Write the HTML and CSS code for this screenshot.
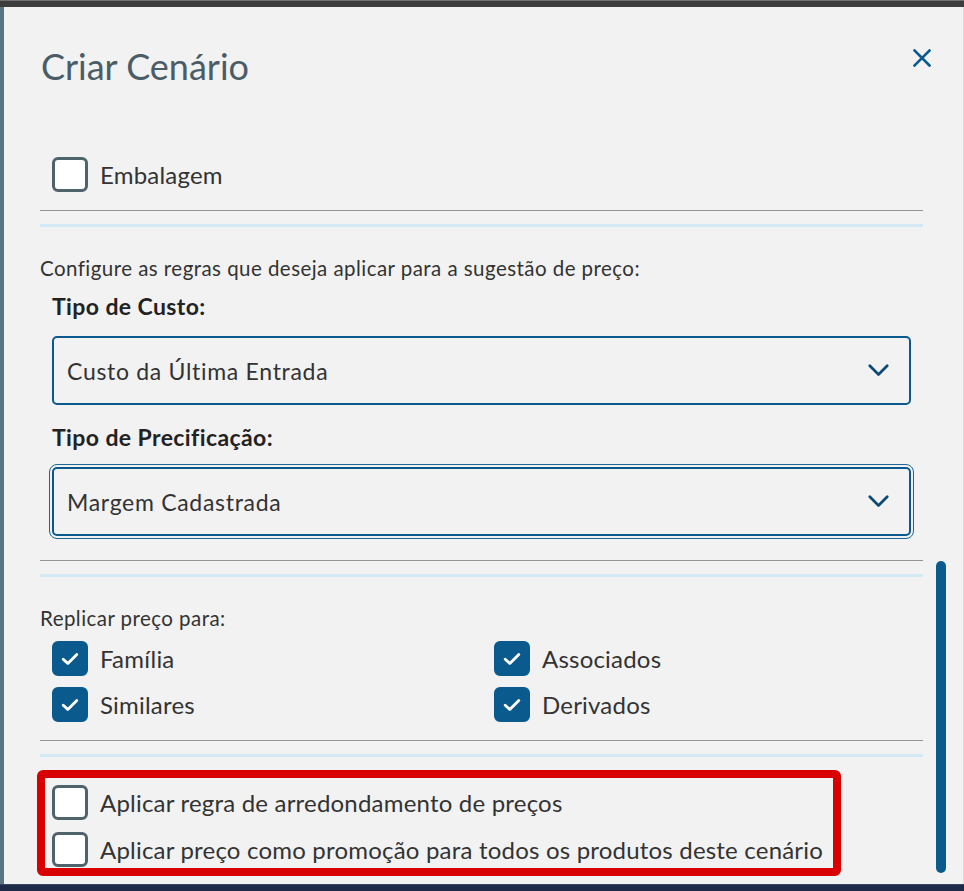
FILE: index.html
```html
<!DOCTYPE html>
<html lang="pt-BR">
<head>
<meta charset="utf-8">
<title>Criar Cenário</title>
<link rel="stylesheet" href="styles.css">
</head>
<body>
<div class="frame">
  <div class="topbar"></div>
  <div class="dialog">
    <header class="head">
      <h1 class="title">Criar Cenário</h1>
      <button class="close" aria-label="Fechar">
        <svg width="18" height="18" viewBox="0 0 18 18"><path d="M1.5 1.5 L16.5 16.5 M16.5 1.5 L1.5 16.5" stroke="#0b5a8e" stroke-width="2.6" stroke-linecap="square" fill="none"/></svg>
      </button>
    </header>
    <div class="body">
      <div class="content">
        <label class="check first"><span class="box"></span><span class="check-text">Embalagem</span></label>
        <div class="rule"></div>
        <div class="rule-blue"></div>

        <p class="hint hint-config">Configure as regras que deseja aplicar para a sugestão de preço:</p>
        <div class="field">
          <div class="field-label">Tipo de Custo:</div>
          <div class="select">
            <span class="select-value">Custo da Última Entrada</span>
            <svg class="chev" width="21" height="13" viewBox="0 0 21 13"><path d="M1.8 1.8 L10.5 10.5 L19.2 1.8" stroke="#0d4a72" stroke-width="2.7" fill="none" stroke-linecap="round" stroke-linejoin="round"/></svg>
          </div>
        </div>
        <div class="field field-second">
          <div class="field-label">Tipo de Precificação:</div>
          <div class="select focused">
            <span class="select-value">Margem Cadastrada</span>
            <svg class="chev" width="21" height="13" viewBox="0 0 21 13"><path d="M1.8 1.8 L10.5 10.5 L19.2 1.8" stroke="#0d4a72" stroke-width="2.7" fill="none" stroke-linecap="round" stroke-linejoin="round"/></svg>
          </div>
        </div>
        <div class="rule rule-after-select"></div>
        <div class="rule-blue"></div>

        <p class="hint hint-replicar">Replicar preço para:</p>
        <div class="check-grid">
          <label class="check"><span class="box checked"><svg width="18" height="14" viewBox="0 0 18 14"><path d="M2.2 7.2 L6.8 11.4 L15.8 2.4" stroke="#fff" stroke-width="2.8" fill="none" stroke-linecap="round" stroke-linejoin="round"/></svg></span><span class="check-text">Família</span></label>
          <label class="check"><span class="box checked"><svg width="18" height="14" viewBox="0 0 18 14"><path d="M2.2 7.2 L6.8 11.4 L15.8 2.4" stroke="#fff" stroke-width="2.8" fill="none" stroke-linecap="round" stroke-linejoin="round"/></svg></span><span class="check-text">Associados</span></label>
          <label class="check"><span class="box checked"><svg width="18" height="14" viewBox="0 0 18 14"><path d="M2.2 7.2 L6.8 11.4 L15.8 2.4" stroke="#fff" stroke-width="2.8" fill="none" stroke-linecap="round" stroke-linejoin="round"/></svg></span><span class="check-text">Similares</span></label>
          <label class="check"><span class="box checked"><svg width="18" height="14" viewBox="0 0 18 14"><path d="M2.2 7.2 L6.8 11.4 L15.8 2.4" stroke="#fff" stroke-width="2.8" fill="none" stroke-linecap="round" stroke-linejoin="round"/></svg></span><span class="check-text">Derivados</span></label>
        </div>
        <div class="rule rule-after-grid"></div>
        <div class="rule-blue"></div>

        <div class="highlight">
          <label class="check"><span class="box"></span><span class="check-text">Aplicar regra de arredondamento de preços</span></label>
          <label class="check"><span class="box"></span><span class="check-text">Aplicar preço como promoção para todos os produtos deste cenário</span></label>
          <div class="highlight-frame"></div>
        </div>
      </div>
      <div class="scroll-track"><div class="scroll-thumb"></div></div>
    </div>
  </div>
  <div class="bottombar"></div>
</div>
</body>
</html>
```
FILE: styles.css
```css
* { box-sizing: border-box; }

html, body {
  margin: 0;
  padding: 0;
  background: #f2f2f2;
}

body {
  font-family: Lato, "Noto Sans", "Liberation Sans", sans-serif;
  color: #333;
}

.frame {
  width: 964px;
  height: 891px;
  display: flex;
  flex-direction: column;
  overflow: hidden;
}

.topbar {
  height: 7px;
  flex: none;
  background: #3d3d3d;
  border-top: 1px solid #707070;
}

.bottombar {
  height: 7px;
  flex: none;
  background: #1f2a48;
  border-top: 1px solid #3a4660;
}

.dialog {
  flex: 1;
  min-height: 0;
  display: flex;
  flex-direction: column;
  background: #f2f2f2;
  border-left: 4px solid #5b7482;
  border-right: 1px solid #d9d9d9;
}

.head {
  display: flex;
  justify-content: space-between;
  align-items: flex-start;
  padding: 39px 32px 0 37px;
  flex: none;
}

.title {
  margin: 0;
  font-size: 36px;
  line-height: 40px;
  font-weight: 400;
  color: #4a5d67;
}

.close {
  margin-top: 3px;
  padding: 0;
  border: 0;
  background: none;
  width: 18px;
  height: 18px;
  display: flex;
}

.body {
  flex: 1;
  min-height: 0;
  display: flex;
  padding-left: 36px;
}

.content {
  width: 883px;
  flex: none;
}

.scroll-track {
  width: 10px;
  margin-left: 13px;
  display: flex;
  flex-direction: column;
}

.scroll-thumb {
  margin-top: 475px;
  height: 312px;
  background: #0b5a8e;
  border-radius: 5px;
}

/* checkboxes */
.check {
  display: flex;
  align-items: center;
  gap: 12px;
  height: 35px;
  padding-left: 12px;
}

.check.first {
  margin-top: 71px;
}

.box {
  width: 36px;
  height: 35px;
  flex: none;
  border: 3px solid #4f636d;
  border-radius: 6px;
  background: #fff;
  display: flex;
  align-items: center;
  justify-content: center;
}

.box.checked {
  background: #0b5a8e;
  border-color: #0b5a8e;
}

.check-text {
  font-size: 24px;
  letter-spacing: 0.2px;
  color: #333;
  white-space: nowrap;
}

/* rules */
.rule {
  height: 1px;
  background: #959595;
  margin-top: 18px;
}

.rule-blue {
  height: 3px;
  background: #d3eaf4;
  margin-top: 13px;
}

.rule-after-select { margin-top: 24px; }
.rule-after-grid { margin-top: 18px; }

/* text */
.hint {
  margin: 0;
  font-size: 20.5px;
  letter-spacing: 0.45px;
  line-height: 22px;
  color: #333;
}

.hint-config { margin-top: 30px; }
.hint-replicar { margin-top: 30px; }

.field {
  padding: 0 12px;
}

.field-label {
  margin-top: 14px;
  font-size: 23px;
  letter-spacing: 0.4px;
  line-height: 26px;
  font-weight: 700;
  color: #222;
}

.field-second .field-label { margin-top: 19px; }

.select {
  margin-top: 17px;
  height: 69px;
  border: 2px solid #0b5a8e;
  border-radius: 5px;
  display: flex;
  align-items: center;
  justify-content: space-between;
  padding: 0 20px 0 13px;
}

.select.focused {
  outline: 1.5px solid #1a6696;
  outline-offset: 2px;
}

.select-value {
  font-size: 23px;
  letter-spacing: 0.7px;
  color: #333;
}

.chev { flex: none; }

/* checked grid */
.check-grid {
  margin-top: 12px;
  display: grid;
  grid-template-columns: 442px 1fr;
  row-gap: 11px;
}

/* highlighted block */
.highlight {
  position: relative;
  margin-top: 28px;
  display: flex;
  flex-direction: column;
  gap: 12px;
}

.highlight-frame {
  position: absolute;
  top: -15px;
  left: -3px;
  width: 804px;
  bottom: -9px;
  border: 8px solid #d80000;
  border-radius: 6px;
  pointer-events: none;
}
```
